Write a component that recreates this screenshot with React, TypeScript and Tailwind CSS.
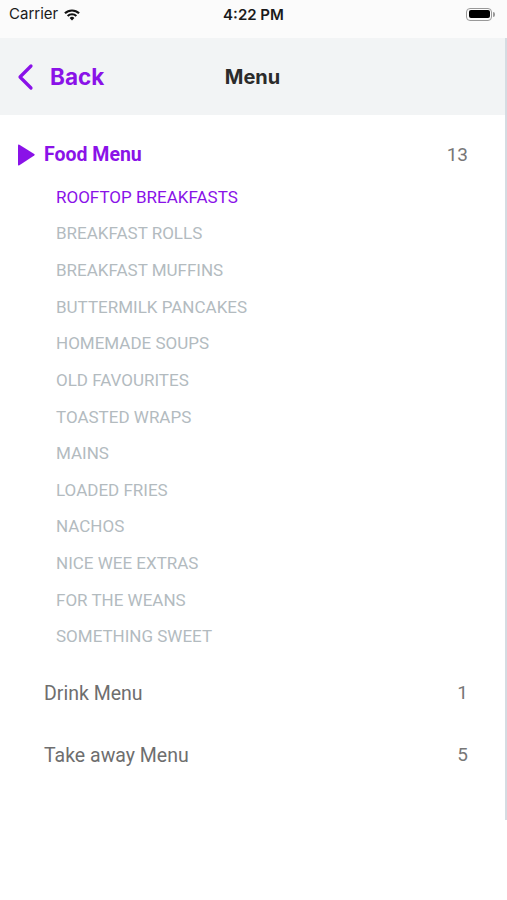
import { useState } from "react";

// Menu category browser: status bar, nav bar, and an expandable list of menus.
type Menu = { name: string; count: number; sections?: string[] };

const MENUS: Menu[] = [
  {
    name: "Food Menu",
    count: 13,
    sections: [
      "ROOFTOP BREAKFASTS",
      "BREAKFAST ROLLS",
      "BREAKFAST MUFFINS",
      "BUTTERMILK PANCAKES",
      "HOMEMADE SOUPS",
      "OLD FAVOURITES",
      "TOASTED WRAPS",
      "MAINS",
      "LOADED FRIES",
      "NACHOS",
      "NICE WEE EXTRAS",
      "FOR THE WEANS",
      "SOMETHING SWEET",
    ],
  },
  { name: "Drink Menu", count: 1 },
  { name: "Take away Menu", count: 5 },
];

function StatusBar() {
  return (
    <div className="relative flex h-[38px] items-center bg-[#fbfbfb] px-[9px] font-['Inter',sans-serif] text-[15px] text-[#1a1a1a]">
      <div className="flex items-center gap-[5px] pb-[10px]">
        <span className="text-[15px]">Carrier</span>
        <svg width="18" height="13" viewBox="0 0 18 13" fill="#111">
          <path d="M9 12.5 6.6 10a3.4 3.4 0 0 1 4.8 0z" />
          <path d="M3.9 7.3a7.3 7.3 0 0 1 10.2 0l-1.5 1.5a5.2 5.2 0 0 0-7.2 0z" />
          <path d="M1.2 4.6a11.1 11.1 0 0 1 15.6 0l-1.5 1.5a9 9 0 0 0-12.6 0z" />
        </svg>
      </div>
      <span className="absolute left-1/2 top-[4px] -translate-x-1/2 font-semibold">4:22 PM</span>
      <div className="ml-auto flex items-center pb-[10px] pr-[3px]">
        <div className="flex h-[13px] w-[26px] items-center rounded-[4px] border border-[#999] p-[1.5px]">
          <div className="h-full w-full rounded-[2px] bg-black" />
        </div>
        <div className="ml-[1px] h-[5px] w-[2px] rounded-r bg-[#999]" />
      </div>
    </div>
  );
}

function NavBar() {
  return (
    <div className="relative flex h-[77px] items-center bg-[#f2f4f5] px-[17px] font-['Inter',sans-serif]">
      <div className="flex items-center gap-[15px] text-[#8a12e8]">
        <svg width="18" height="28" viewBox="0 0 18 28" fill="none" stroke="currentColor" strokeWidth="3.2" strokeLinecap="round" strokeLinejoin="round">
          <path d="M14 3 3 14l11 11" />
        </svg>
        <span className="text-[22.5px] font-bold">Back</span>
      </div>
      <span className="absolute left-1/2 top-1/2 -translate-x-1/2 -translate-y-1/2 text-[20px] font-bold text-[#2b2b2b]">
        Menu
      </span>
    </div>
  );
}

export default function App() {
  const [open, setOpen] = useState<string | null>("Food Menu");
  const [active] = useState("ROOFTOP BREAKFASTS");

  return (
    <div className="min-h-[900px] bg-white font-['Roboto',sans-serif]">
      <StatusBar />
      <div className="h-[782px] border-r-2 border-[#d5dce2]">
        <NavBar />
        <div className="pt-[26px]">
          {MENUS.map((m) => {
            const isOpen = open === m.name;
            return (
              <div key={m.name} className={isOpen ? "mb-[24px]" : "mb-[34px]"}>
                <button
                  type="button"
                  onClick={() => setOpen(isOpen ? null : m.name)}
                  className="flex h-[28px] w-full items-center pl-[16px] pr-[37px] text-left"
                >
                  <span className="w-[28px]">
                    {isOpen ? (
                      <svg width="20" height="24" viewBox="0 0 20 24">
                        <path d="M2 2.5Q2 1 3.4 1.8l14.8 9.2q1.2.8 0 1.6L3.4 22.2Q2 23 2 21.5z" fill="#8a12e8" />
                      </svg>
                    ) : null}
                  </span>
                  <span
                    className={
                      isOpen
                        ? "text-[19.5px] font-bold text-[#8a12e8]"
                        : "text-[19.5px] text-[#6e6e6e]"
                    }
                  >
                    {m.name}
                  </span>
                  <span className="ml-auto text-[19px] text-[#777]">{m.count}</span>
                </button>
                {isOpen && m.sections ? (
                  <ul className="mt-[10px] pl-[56px]">
                    {m.sections.map((s) => (
                      <li
                        key={s}
                        className={
                          s === active
                            ? "flex h-[36.67px] items-center text-[17px] text-[#8a12e8]"
                            : "flex h-[36.67px] items-center text-[17px] text-[#b3bbbf]"
                        }
                      >
                        {s}
                      </li>
                    ))}
                  </ul>
                ) : null}
              </div>
            );
          })}
        </div>
      </div>
    </div>
  );
}
